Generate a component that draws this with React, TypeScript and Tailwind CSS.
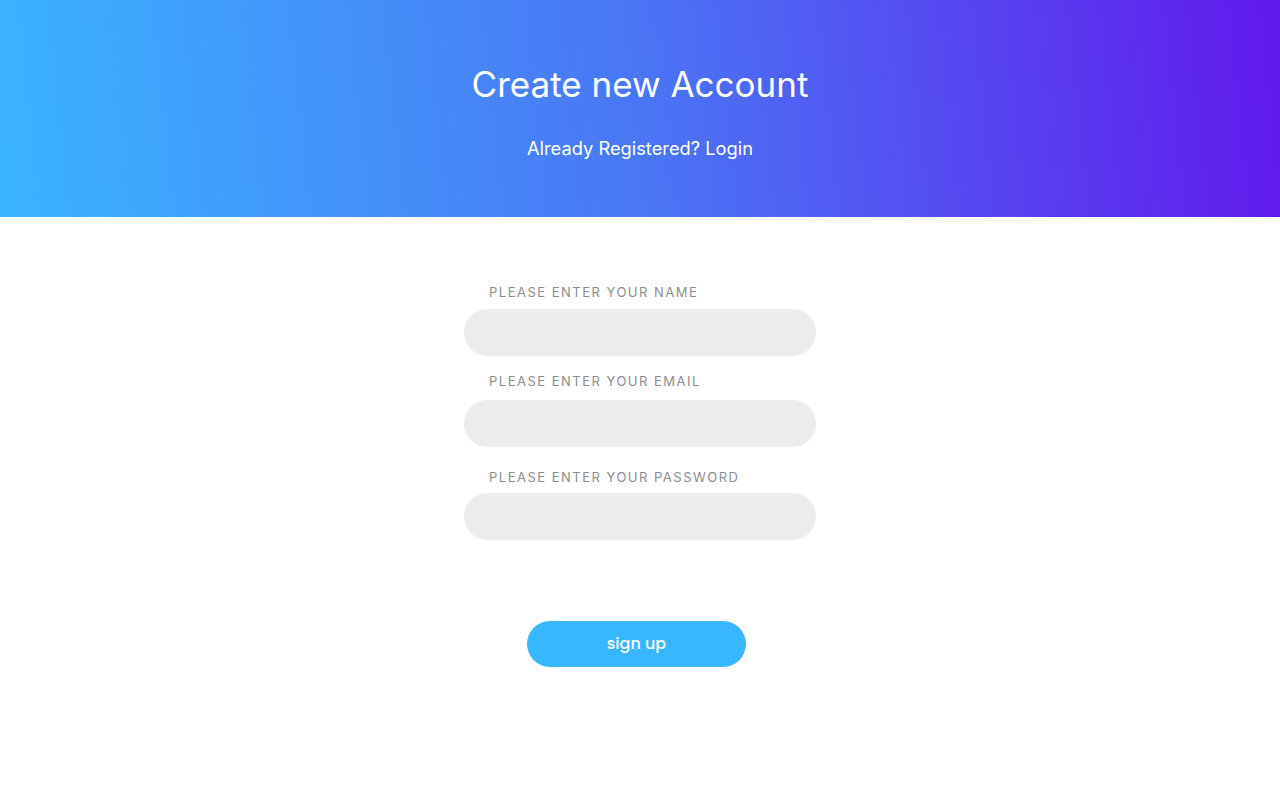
export default function App() {
  const fields = [
    { label: "Please enter your name", type: "text", mt: "mt-[67px]", gap: "mt-[9px]" },
    { label: "Please enter your email", type: "email", mt: "mt-[17px]", gap: "mt-[11px]" },
    { label: "Please enter your password", type: "password", mt: "mt-[22px]", gap: "mt-[8px]" },
  ];

  return (
    <div className="min-h-[800px] bg-white font-['Inter',sans-serif]">
      {/* header */}
      <div className="h-[217px] bg-[linear-gradient(84deg,#3ab4ff_0%,#4a76f5_50%,#6119ec_100%)] flex flex-col items-center text-white">
        <h1 className="mt-[60px] text-[35px] leading-[48px] font-normal">
          Create new Account
        </h1>
        <p className="mt-[27px] text-[18.3px] leading-[26px]">
          Already Registered? Login
        </p>
      </div>

      {/* form */}
      <form className="w-[352px] mx-auto flex flex-col">
        {fields.map((f) => (
          <div key={f.label} className={f.mt}>
            <label className="block pl-[25px] text-[13px] leading-[16px] uppercase tracking-[0.115em] text-[#8d8d8d]">
              {f.label}
            </label>
            <input
              type={f.type}
              className={`${f.gap} w-full h-[47px] rounded-full bg-[#ececec] px-6 outline-none`}
            />
          </div>
        ))}
        <button
          type="button"
          className="mt-[81px] ml-[63px] w-[219px] h-[46px] rounded-full bg-[#38b6ff] text-white text-[16px] font-medium font-['Poppins','Inter',sans-serif]"
        >
          sign up
        </button>
      </form>
    </div>
  );
}
